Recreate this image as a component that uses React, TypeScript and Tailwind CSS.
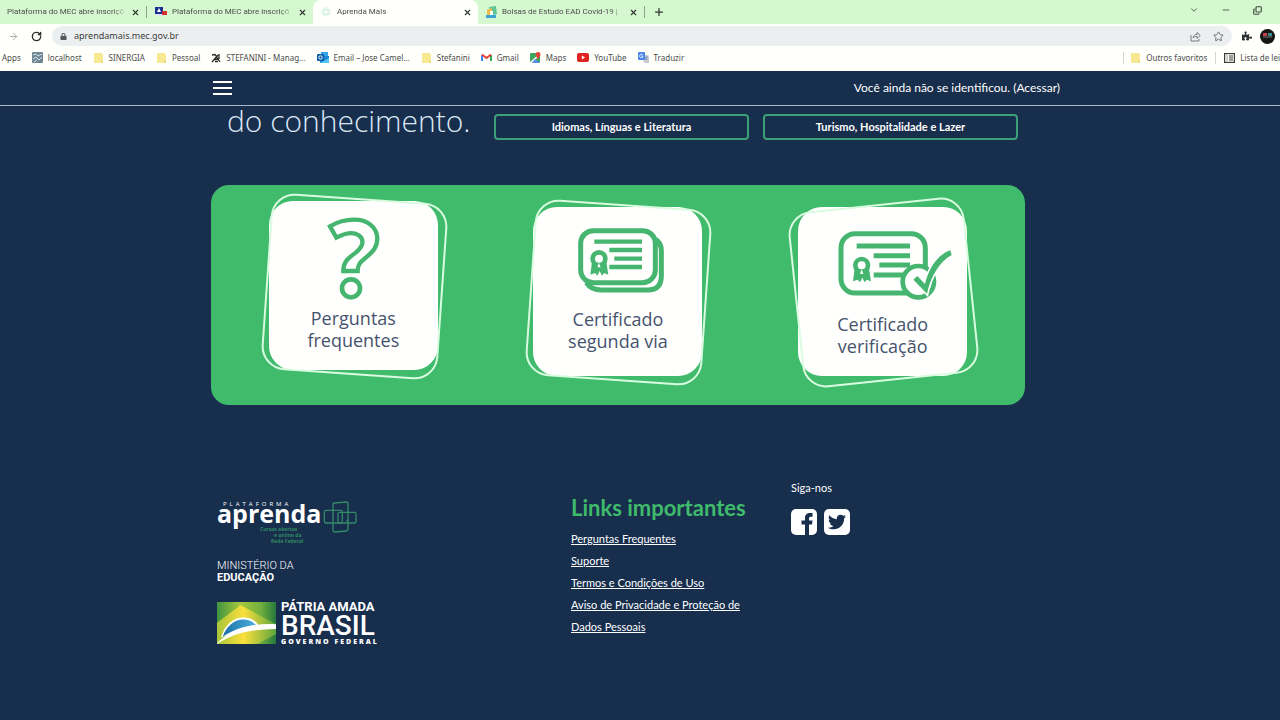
import React from "react"
import { ChevronDown, Copy, Minus, Plus, RotateCw, ArrowRight, Star, X } from "lucide-react"
import { FaLock, FaPuzzlePiece, FaTwitter } from "react-icons/fa"

// ─── Favicons ────────────────────────────────────────────────────────────────

function Folder() {
  return (
    <svg width="11" height="12" viewBox="0 0 11 12">
      <path d="M1 1h8l1 2v8H1z" fill="#f8e892" />
      <path d="M8 8h2v3H8z" fill="#eedb80" />
    </svg>
  )
}

function LocalhostIcon() {
  return (
    <svg width="11" height="11" viewBox="0 0 11 11">
      <rect width="11" height="11" rx="1" fill="#6f8794" />
      <path d="M1 3l3-1 2 2 4-2M1 7l3-2 3 3 3-3M2 10l3-2" stroke="#d6e3ea" fill="none" />
    </svg>
  )
}

function StefaniniIcon() {
  return (
    <svg width="10" height="10" viewBox="0 0 10 10" fill="none" stroke="#2b2b2b" strokeWidth="1.3">
      <path d="M1 2l3-.5L9 9M1 9l6-7M3.500 6.500L8 5.500V1M4 8.500h3" />
    </svg>
  )
}

function OutlookIcon() {
  return (
    <svg width="12" height="11" viewBox="0 0 12 11">
      <path d="M4 0h7v5H4z" fill="#35a6e6" />
      <path d="M3 4h9v7H3z" fill="#1b86d4" />
      <path d="M3 11l9-5v5z" fill="#50c4f3" />
      <rect y="2" width="7" height="7" rx="1" fill="#0a5ba8" />
      <circle cx="3.5" cy="5.5" r="1.7" fill="none" stroke="#fff" />
    </svg>
  )
}

function GmailIcon() {
  return (
    <svg width="11" height="9" viewBox="0 0 11 9" fill="none" strokeWidth="2">
      <path d="M1 8V2" stroke="#4285f4" />
      <path d="M10 8V2" stroke="#34a853" />
      <path d="M1 1.5l4.500 3.500L10 1.500" stroke="#ea4335" />
    </svg>
  )
}

function MapsIcon() {
  return (
    <svg width="11" height="11" viewBox="0 0 11 11">
      <rect y="1" width="10" height="10" rx="1" fill="#3da65a" />
      <path d="M0 10L9 2l1 1-8 8H0z" fill="#f3f3f3" />
      <path d="M5 7l5 4H2z" fill="#5b8def" />
      <path d="M8 0a2.500 2.500 0 0 1 2.500 2.500C10.500 4 8 7 8 7S5.500 4 5.500 2.500A2.500 2.500 0 0 1 8 0z" fill="#e04438" />
    </svg>
  )
}

function YoutubeIcon() {
  return (
    <svg width="12" height="9" viewBox="0 0 12 9">
      <rect width="12" height="9" rx="2" fill="#e02421" />
      <path d="M4.800 2.500v4L8 4.500z" fill="#fff" />
    </svg>
  )
}

function TranslateIcon() {
  return (
    <svg width="11" height="11" viewBox="0 0 11 11">
      <path d="M4 3h6l1 1v7H6z" fill="#c9cdd3" />
      <rect width="7" height="8" rx="1" fill="#4a86e8" />
      <path d="M5 4H3.500M5 4a1.700 1.700 0 1 1-.5-1.300" stroke="#fff" strokeWidth=".8" fill="none" />
      <path d="M7 5h3M8.500 5L7.500 8M7.500 6l2 2" stroke="#5f7fb5" strokeWidth=".7" />
    </svg>
  )
}

function ReadingListIcon() {
  return (
    <svg width="11" height="10" viewBox="0 0 11 10" fill="none" stroke="#3c3c3c" strokeWidth="1.200">
      <rect x=".6" y=".6" width="9.800" height="8.800" />
      <path d="M2.500 3h1M2.500 5h1M2.500 7h1M5 3h4M5 5h4M5 7h4" />
    </svg>
  )
}

function MecFavicon() {
  return (
    <svg width="12" height="10" viewBox="0 0 12 10">
      <rect width="8" height="7" fill="#1c2f93" />
      <path d="M4 1l2 4H2z" fill="#fff" />
      <path d="M1 7h7v2H1z" fill="#dfe3f2" />
      <path d="M7 4h5v4H7z" fill="#d32f2f" />
    </svg>
  )
}

function AprendaFavicon() {
  return (
    <svg width="10" height="10" viewBox="0 0 10 10" fill="none" stroke="#cdeedd">
      <rect x="3" y="1" width="4" height="7" rx="1" />
      <rect x="1" y="3" width="8" height="4" rx="1" />
    </svg>
  )
}

function BolsasFavicon() {
  return (
    <svg width="11" height="12" viewBox="0 0 11 12">
      <path d="M3 1l7-1 1 8-6 2z" fill="#5fc596" />
      <path d="M1 4l5-2v6l-5 2z" fill="#f4b942" />
      <path d="M0 9h10v3H0z" fill="#3ba5d8" />
      <path d="M4 5h3v4H4z" fill="#fff" />
    </svg>
  )
}

// ─── Browser ─────────────────────────────────────────────────────────────────

interface TabProps {
  title: string
  icon?: React.ReactNode
  active?: boolean
  className: string
}

function Tab({ title, icon, active = false, className }: TabProps) {
  return (
    <div className={`flex h-6 items-center gap-1 pr-1.5 ${active ? "rounded-t-lg bg-[#fffffc]" : ""} ${className}`}>
      <button type="button" className="flex min-w-0 flex-1 items-center gap-[5px] text-left">
        {icon && <span className="flex w-3 shrink-0 justify-center">{icon}</span>}
        <span className="flex-1 whitespace-nowrap [mask-image:linear-gradient(to_right,black_88%,transparent)]">
          {title}
        </span>
      </button>
      <button type="button" aria-label={`Fechar ${title}`}>
        <X size={9} strokeWidth={3} className="text-[#2e3a2e]" />
      </button>
    </div>
  )
}

const bookmarks = [
  { label: "localhost", icon: <LocalhostIcon /> },
  { label: "SINERGIA", icon: <Folder /> },
  { label: "Pessoal", icon: <Folder /> },
  { label: "STEFANINI - Manag...", icon: <StefaniniIcon /> },
  { label: "Email – Jose Camel...", icon: <OutlookIcon /> },
  { label: "Stefanini", icon: <Folder /> },
  { label: "Gmail", icon: <GmailIcon /> },
  { label: "Maps", icon: <MapsIcon /> },
  { label: "YouTube", icon: <YoutubeIcon /> },
  { label: "Traduzir", icon: <TranslateIcon /> },
]

function Browser() {
  return (
    <div className="bg-[#fffffc] font-['Noto_Sans',sans-serif] text-[8px] text-[#4a4d4a]">
      <div className="flex h-6 items-center bg-[#d6f8d0] font-[Roboto,sans-serif]">
        <Tab title="Plataforma do MEC abre inscriçõ" className="w-[146px] pl-[7px]" />
        <span className="h-3 w-px bg-[#8aa588]" />
        <Tab title="Plataforma do MEC abre inscriçõ" icon={<MecFavicon />} className="w-[166px] pl-2" />
        <Tab title="Aprenda Mais" icon={<AprendaFavicon />} active className="w-[165px] pl-[7px]" />
        <Tab title="Bolsas de Estudo EAD Covid-19 |" icon={<BolsasFavicon />} className="w-[166px] pl-[7px]" />
        <span className="h-3 w-px bg-[#8aa588]" />
        <button type="button" aria-label="Nova guia" className="ml-2">
          <Plus size={12} strokeWidth={2.500} className="text-[#2e3a2e]" />
        </button>
        <div className="mb-1 ml-auto flex items-center gap-[22px] pr-[18px] text-[#3d4a3d]">
          <button type="button" aria-label="Pesquisar guias"><ChevronDown size={10} /></button>
          <button type="button" aria-label="Minimizar"><Minus size={10} /></button>
          <button type="button" aria-label="Restaurar"><Copy size={9} strokeWidth={3} className="-scale-x-100 -scale-y-100 rotate-90" /></button>
        </div>
      </div>

      <div className="flex h-6 items-center pl-2">
        <button type="button" aria-label="Avançar" className="mr-3">
          <ArrowRight size={11} className="text-[#a3a5a3]" />
        </button>
        <button type="button" aria-label="Recarregar" className="mr-2.5">
          <RotateCw size={11} strokeWidth={3} className="text-[#2f2f2f]" />
        </button>
        <div className="flex h-5 flex-1 items-center rounded-full bg-[#eceff0] px-2">
          <FaLock size={7} className="mr-[7px] text-[#55585b]" />
          <input
            type="text"
            aria-label="Endereço"
            defaultValue="aprendamais.mec.gov.br"
            className="min-w-0 flex-1 bg-transparent text-[9px] text-[#3a3d40] outline-none"
          />
          <button type="button" aria-label="Compartilhar" className="mr-3">
            <svg width="11" height="11" viewBox="0 0 11 11" fill="none" stroke="#777b7e">
              <path d="M1 4v6h8V8M3 7c.5-2.500 2-3.500 4-3.500V1.500L10.300 4.500 7 7.500V5.500c-2 0-3 .5-4 1.500z" />
            </svg>
          </button>
          <button type="button" aria-label="Favoritar">
            <Star size={11} className="text-[#606468]" />
          </button>
        </div>
        <button type="button" aria-label="Extensões" className="ml-2.5">
          <FaPuzzlePiece size={10} className="text-[#2f3235]" />
        </button>
        <button type="button" aria-label="Perfil" className="ml-2 mr-[5px]">
          <svg width="15" height="15" viewBox="0 0 15 15">
            <circle cx="7.500" cy="7.500" r="7.500" fill="#161616" />
            <path d="M3 4h4v3H3z" fill="#c8404a" />
            <path d="M8 4h4v3H8z" fill="#3b8c90" />
            <path d="M3 8h9" stroke="#777" />
          </svg>
        </button>
      </div>

      <nav className="flex h-[23px] items-center overflow-hidden whitespace-nowrap pb-1 pl-0.5">
        <a href="#apps">Apps</a>
        {bookmarks.map(({ label, icon }) => (
          <a key={label} href="#favorito" className="ml-[11px] flex items-center gap-[5px]">
            {icon}
            {label}
          </a>
        ))}
        <div className="ml-auto flex items-center">
          <span className="mr-1.5 h-3 w-px bg-[#d3d5d2]" />
          <a href="#outros" className="flex items-center gap-[5px]"><Folder />Outros favoritos</a>
          <span className="mx-2 h-3 w-px bg-[#d3d5d2]" />
          <a href="#leitura" className="flex items-center gap-[5px]">
            <ReadingListIcon />
            Lista de lei
          </a>
        </div>
      </nav>
    </div>
  )
}

// ─── Card drawings ───────────────────────────────────────────────────────────

function QuestionDrawing() {
  return (
    <svg width="56" height="84" viewBox="378 108 168 252" fill="none" stroke="#45b56f" strokeWidth="13">
      <path d="M393 139L412 173C435 161 460 154 478 165C499 179 491 201 470 218C447 235 433 245 433 273H476C476 255 482 247 500 233C524 214 535 200 535 175C533 140 505 119 465 119C440 119 415 126 393 139Z" />
      <circle cx="456" cy="325" r="27" strokeWidth="14" />
    </svg>
  )
}

function Ribbon() {
  return (
    <>
      <path d="M-21 10l-5 38 14-5 7 8 7-14 7 14 6-8 13 5-6-38z" fill="#45b56f" />
      <circle r="19" fill="#fff" stroke="#45b56f" strokeWidth="14" />
      <path d="M0 12l5 14h-10z" fill="#fff" />
    </>
  )
}

function CertificatesDrawing() {
  return (
    <svg width="93" height="65" viewBox="212 144 279 195" fill="none" stroke="#45b56f" strokeWidth="15">
      <path d="M466 178Q483 190 483 212V288Q483 330 442 330H303Q272 330 258 308" />
      <rect x="241" y="152" width="224" height="156" rx="38" />
      <path d="M282 185H425M327 210H425M342 236H425M327 261H425" strokeWidth="13" />
      <g transform="translate(296 236)" stroke="none"><Ribbon /></g>
    </svg>
  )
}

function VerifiedDrawing() {
  return (
    <svg width="140" height="69" viewBox="157 154 420 207" fill="none" stroke="#45b56f" strokeWidth="15">
      <rect x="241" y="162" width="253" height="178" rx="42" />
      <path d="M288 199H448M339 228H448M356 256H448M339 286H448" />
      <g transform="translate(303 257)" stroke="none"><Ribbon /></g>
      <circle cx="473" cy="306" r="47" fill="#fff" strokeWidth="14" />
      <path
        d="M458 300L470 289L493 313C503 268 530 225 569 212L573 226C537 245 510 290 499 342Z"
        fill="#45b56f"
        stroke="#fff"
        strokeWidth="10"
        paintOrder="stroke"
      />
    </svg>
  )
}

const cards = [
  {
    lines: ["Perguntas", "frequentes"],
    drawing: <QuestionDrawing />,
    place: "mt-4 pt-[15px] gap-[7px]",
    outline: "rotate-4",
  },
  {
    lines: ["Certificado", "segunda via"],
    drawing: <CertificatesDrawing />,
    place: "mt-[22px] pt-[21px] gap-[15px]",
    outline: "rotate-4",
  },
  {
    lines: ["Certificado", "verificação"],
    drawing: <VerifiedDrawing />,
    place: "mt-[22px] pt-6 gap-[13px]",
    outline: "-rotate-6",
  },
]

// ─── Footer ──────────────────────────────────────────────────────────────────

const footerLinks = [
  "Perguntas Frequentes",
  "Suporte",
  "Termos e Condições de Uso",
  "Aviso de Privacidade e Proteção de Dados Pessoais",
]

function AprendaLogo() {
  return (
    <div className="w-[140px] font-['Open_Sans',sans-serif]">
      <p className="pl-1.5 text-[6px] leading-[6px] tracking-[3px]">PLATAFORMA</p>
      <div className="-mt-1 flex h-5 items-start gap-0.5">
        <span className="w-[105px] text-[25px] font-bold leading-5">aprenda</span>
        <svg width="34" height="32" viewBox="0 0 102 96" fill="none" stroke="#348a68" strokeWidth="4" className="-mt-0.5 shrink-0">
          <rect x="4" y="28" width="54" height="38" rx="5" />
          <path d="M30 62V10Q30 6 34 6L70 3Q75 3 75 8V56Q75 60 70 60" />
          <path d="M30 62V88Q30 93 35 93L70 90Q75 90 75 85V56" />
          <path d="M45 38Q45 34 50 34H94Q99 34 99 39V62Q99 66 94 66H50Q45 66 45 61Z" />
        </svg>
      </div>
      <p className="mt-[3px] pl-[43px] text-[5px] font-bold leading-[6px] text-[#318a62]">
        Cursos abertos
        <span className="block pl-[14px]">e online da</span>
        <span className="block pl-[11px]">Rede Federal</span>
      </p>
    </div>
  )
}

function FlagLogo() {
  return (
    <svg width="59" height="42" viewBox="0 0 175 125" preserveAspectRatio="none">
      <defs>
        <linearGradient id="field" x1="0" y1="0" x2="1" y2="0">
          <stop offset="0" stopColor="#3f9440" />
          <stop offset=".4" stopColor="#a9c83c" />
          <stop offset=".75" stopColor="#6fae3e" />
          <stop offset="1" stopColor="#25783d" />
        </linearGradient>
        <linearGradient id="diamond" x1="0" y1="0" x2="1" y2="0">
          <stop offset="0" stopColor="#a9c53a" />
          <stop offset=".45" stopColor="#fae03c" />
          <stop offset="1" stopColor="#5fa63e" />
        </linearGradient>
        <linearGradient id="globe" x1="0" y1="0" x2="1" y2="0">
          <stop offset="0" stopColor="#1d6fa8" />
          <stop offset="1" stopColor="#4bb0dc" />
        </linearGradient>
      </defs>
      <path d="M0 0h175v125H0z" fill="url(#field)" />
      <path d="M70 10L175 66V95L120 125H0V62z" fill="url(#diamond)" />
      <path d="M12 106C22 66 52 44 82 46C102 48 114 56 122 68L60 90z" fill="#fff" />
      <path d="M17 104C26 72 54 50 80 52C98 53 108 60 115 68C70 74 40 88 17 104z" fill="url(#globe)" />
      <path d="M0 123C40 82 100 62 175 66V80C100 82 50 92 0 125z" fill="#fff" />
    </svg>
  )
}

function FacebookIcon() {
  return (
    <svg width="26" height="26" viewBox="0 0 26 26">
      <rect width="26" height="26" rx="5" fill="#fff" />
      <path d="M14 26V15.500h-3.500v-4H14V9c0-3.500 2-5 5-5h2.500v3.700H20c-1.500 0-2 .6-2 1.900v1.900h3.500l-.5 4h-3V26z" fill="#172e4d" />
    </svg>
  )
}

export default function App() {
  return (
    <div className="flex min-h-screen flex-col overflow-hidden bg-[#172e4d] text-white">
      <Browser />

      <header className="flex h-[35px] items-center justify-between border-b border-[#a9b8c6] pl-[213px] pr-[220px] font-[Lato,sans-serif] text-[12px]">
        <button type="button" aria-label="Abrir menu" className="flex w-[19px] flex-col gap-1">
          <span className="h-0.5 bg-white" />
          <span className="h-0.5 bg-white" />
          <span className="h-0.5 bg-white" />
        </button>
        <p>
          Você ainda não se identificou. (<a href="#acessar">Acessar</a>)
        </p>
      </header>

      <main className="pl-[211px] pr-[255px] pt-2">
        <div className="flex items-start pl-4 pr-[7px]">
          <h1 className="w-[267px] shrink-0 font-['Open_Sans',sans-serif] text-[30px] font-light leading-[14px] text-[#dbe7f5]">
            do conhecimento.
          </h1>
          <div className="grid flex-1 grid-cols-2 gap-[14px] font-[Lato,sans-serif] text-[11px] font-bold">
            <button type="button" className="h-[26px] rounded border-2 border-[#3c9f75]">Idiomas, Línguas e Literatura</button>
            <button type="button" className="h-[26px] rounded border-2 border-[#3c9f75]">Turismo, Hospitalidade e Lazer</button>
          </div>
        </div>

        <section className="mt-[45px] grid grid-cols-3 items-start justify-items-center rounded-[18px] bg-[#3fbb6b] px-2.5 pb-[29px]">
          {cards.map(({ lines, drawing, place, outline }) => (
            <a
              key={lines.join(" ")}
              href="#certificados"
              className={`relative flex h-[169px] w-[169px] flex-col items-center rounded-3xl bg-[#fffffe] ${place}`}
            >
              <span className={`absolute -bottom-[5px] -left-[3px] -right-[5px] -top-[3px] rounded-3xl border-2 border-[#d9fbe0] ${outline}`} />
              <span className="relative">{drawing}</span>
              <span className="relative text-center font-['Open_Sans',sans-serif] text-lg leading-[22px] text-[#46536c]">
                {lines[0]}
                <br />
                {lines[1]}
              </span>
            </a>
          ))}
        </section>
      </main>

      <footer className="grid grid-cols-[354px_220px_1fr] pl-[217px] pt-[76px] font-[Lato,sans-serif]">
        <div className="pt-5">
          <AprendaLogo />
          <p className="mt-4 font-[Roboto,sans-serif] text-[11px] font-light leading-3">
            MINISTÉRIO DA
            <br />
            <b className="font-bold">EDUCAÇÃO</b>
          </p>
          <div className="mt-4 flex items-center gap-[5px] font-['Open_Sans',sans-serif]">
            <FlagLogo />
            <div>
              <p className="font-[Roboto,sans-serif] text-[13px] font-bold leading-[14px]">PÁTRIA AMADA</p>
              <p className="font-[Roboto,sans-serif] text-[28px] font-medium leading-6">BRASIL</p>
              <p className="text-[7px] font-extrabold leading-2 tracking-[2px]">GOVERNO FEDERAL</p>
            </div>
          </div>
        </div>

        <div className="pt-[15px]">
          <h2 className="text-[22px] font-bold leading-6 text-[#3fbb6b]">Links importantes</h2>
          <ul className="mt-2 w-[180px] text-[11px] leading-[22px]">
            {footerLinks.map(label => (
              <li key={label}>
                <a href="#link" className="underline">{label}</a>
              </li>
            ))}
          </ul>
        </div>

        <div>
          <p className="text-[11px] leading-[14px]">Siga-nos</p>
          <div className="mt-[14px] flex gap-[7px]">
            <a href="#facebook" aria-label="Facebook"><FacebookIcon /></a>
            <a href="#twitter" aria-label="Twitter" className="flex size-[26px] items-center justify-center rounded-[5px] bg-white">
              <FaTwitter size={18} className="text-[#172e4d]" />
            </a>
          </div>
        </div>
      </footer>
    </div>
  )
}
